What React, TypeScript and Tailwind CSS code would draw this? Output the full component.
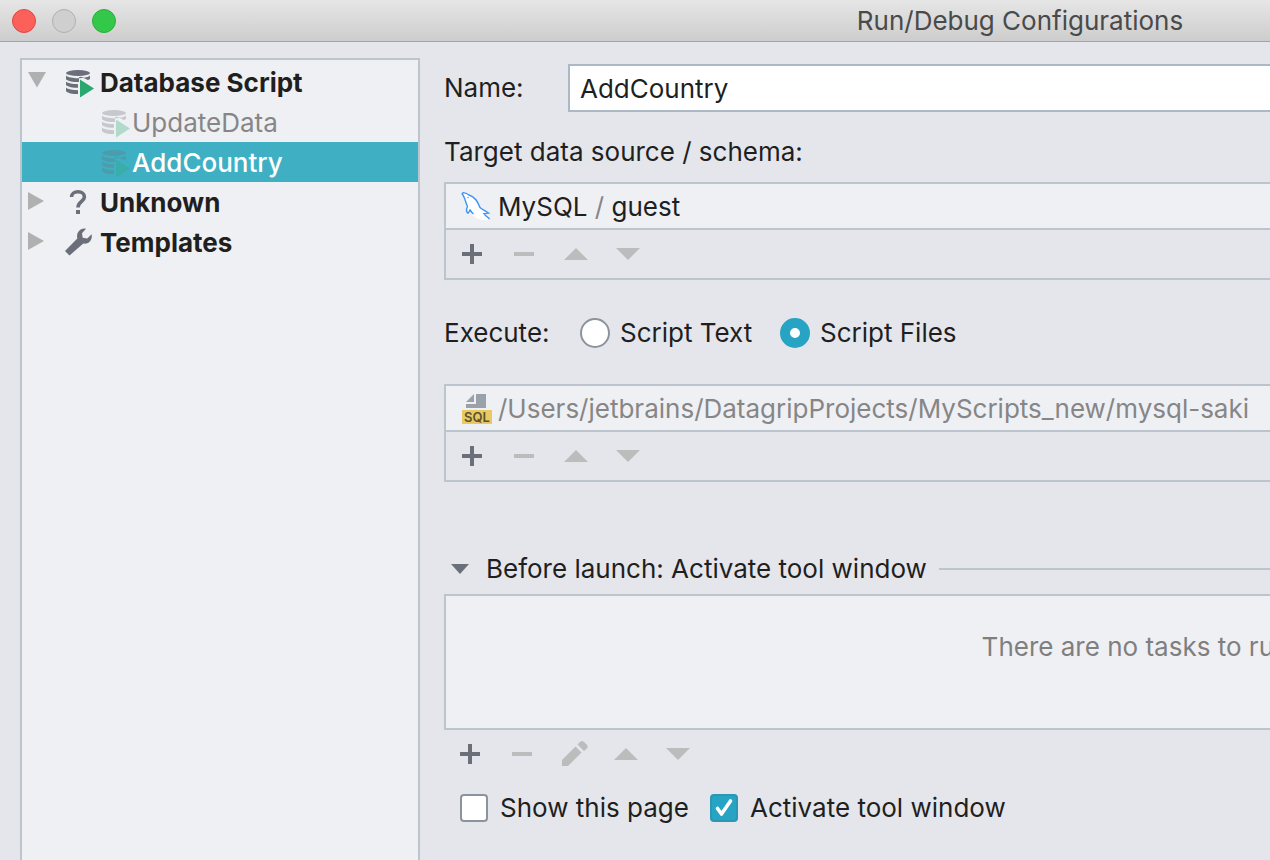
import { useState } from "react";
import type { ReactNode } from "react";

/* icons */

const DatabaseIcon = ({ className = "" }: { className?: string }) => (
    <svg className={`size-8 shrink-0 ${className}`} viewBox="0 1 32 32" aria-hidden="true">
        <g fill="#6b6f7a">
            <ellipse cx="14" cy="7" rx="12" ry="3" />
            <path d="M2 9.500c2 2 7 2.700 12 2.700s10-.7 12-2.700v3.500l-2 1-7-3.200-2 .4V16C9 16 4 15.200 2 13.200z" />
            <path d="M2 15.600c2 1.800 6.500 2.600 12 2.600v3.600C9 21.800 4 21 2 19z" />
            <path d="M2 21.600c2 1.800 6.500 2.600 12 2.600V28C8 28 4 27.200 2 25.200z" />
        </g>
        <path d="M16 13.500 30 22.500 16 31.500z" fill="#29a96f" />
    </svg>
);

const QuestionIcon = () => (
    <svg className="size-8 shrink-0" viewBox="0 1 32 32" aria-hidden="true">
        <path
            d="M7.500 11C7.500 7.500 10.500 5.800 14 5.800s6.400 1.800 6.400 5.200c0 4.500-6.400 4.500-6.400 10.500"
            fill="none"
            stroke="#6b6f7a"
            strokeWidth="3.600"
        />
        <rect x="12" y="24" width="4" height="4" fill="#6b6f7a" />
    </svg>
);

const WrenchIcon = () => (
    <svg className="size-8 shrink-0" viewBox="0 1 32 32" aria-hidden="true">
        <path
            d="M22 2.700 18 7.200l.7 4.500 4.600.8 4.300-4.300c1.300 5.300-2.600 10.300-8.300 9.300L5.500 29.500 1 25 13.300 12.500C12 6.200 16.500 1.500 22 2.700z"
            fill="#6b6f7a"
        />
    </svg>
);

const MySqlIcon = () => (
    <svg className="size-8 shrink-0" viewBox="0 0 32 32" aria-hidden="true">
        <path
            d="M2 2.500c3-1.500 6-.5 8 1.500 5 2 8 7 9.500 12.500 2 2 5 3 7.500 5.500l-3.500.5c1 2 4 3.500 5 6-5 1.500-11 0-14.500-3-2-1.500-3-3-4-4.500-1 .5-1.500 2.500-2 3-2.500-2-1.500-5-.5-7.500C5 13 4.500 7 2 2.500z"
            fill="#fff"
        />
        <path
            d="M8 22.500c-2-2-1.500-5-.5-7C5.500 12 5 6 2.300 3.300 1.500 1 6 1.500 9 4c5 1.500 9 7 11 12.500 2 2 5 3 8.500 5.500l-4.500.5c1 2 3.500 3.500 5.500 5.500M8 22.500l2-3.500c1 1.500 2 3 3.500 4"
            fill="none"
            stroke="#3b93f5"
            strokeWidth="1.400"
        />
        <circle cx="8" cy="6.500" r=".7" fill="#3b93f5" />
    </svg>
);

const SqlFileIcon = () => (
    <svg className="size-8 shrink-0" viewBox="0 0 32 32" aria-hidden="true">
        <path d="M14 1v8H6z" fill="#9ba1a9" />
        <path d="M16 1h10v14H6v-4h10z" fill="#9ba1a9" />
        <rect x="2" y="17" width="30" height="14" fill="#e9c962" />
        <text
            x="17"
            y="29"
            textAnchor="middle"
            fontFamily="Inter, sans-serif"
            fontSize="13"
            fontWeight="600"
            fill="#5a5230"
        >
            SQL
        </text>
    </svg>
);

const toolShapes = {
    Add: "M12 4h4v8h8v4h-8v8h-4v-8H4v-4h8z",
    Remove: "M4 12h20v4H4z",
    Edit: "M2 20 15.500 6.500 21.500 12.500 8 26H2zM17.500 4.500l2.700-2.700q1.800-1.800 3.600 0l3 3q1.800 1.800 0 3.600L24 11z",
    Up: "M14 8 26 20H2z",
    Down: "M2 8h24L14 20z",
};

type Tool = keyof typeof toolShapes;

const Toolbar = ({ tools, label }: { tools: Tool[]; label: string }) => (
    <div role="toolbar" aria-label={label} className="flex h-12 items-center">
        {tools.map((tool) => (
            <button
                key={tool}
                type="button"
                aria-label={tool}
                disabled={tool !== "Add"}
                className="flex h-full w-13 items-center justify-center text-[#6b6f7a] disabled:text-[#bcbcbc]"
            >
                <svg className="size-7" viewBox="0 0 28 28" aria-hidden="true">
                    <path d={toolShapes[tool]} fill="currentColor" />
                </svg>
            </button>
        ))}
    </div>
);

/* sidebar tree */

const Arrow = ({ open }: { open: boolean }) => (
    <svg className="mr-4 mb-0.5 size-5 shrink-0" viewBox="0 0 20 20" aria-hidden="true">
        <path d={open ? "M0 0h18L9 15.500z" : "M0 0 16 9 0 18z"} fill="#b0b0b0" />
    </svg>
);

const Group = ({ open = false, icon, name }: { open?: boolean; icon: ReactNode; name: string }) => (
    <button type="button" aria-expanded={open} className="flex h-10 w-full items-center pt-0.5 pl-1.5 font-bold">
        <Arrow open={open} />
        {icon}
        <span className="ml-1">{name}</span>
    </button>
);

const scripts = ["UpdateData", "AddCountry"];

const Sidebar = ({ selected, onSelect }: { selected: string; onSelect: (name: string) => void }) => (
    <nav className="mt-4 ml-5 w-[400px] shrink-0 border-2 border-b-0 border-[#bcc5ce] bg-[#eff0f4] pt-0.5">
        <Group open icon={<DatabaseIcon />} name="Database Script" />
        {scripts.map((name) => (
            <button
                key={name}
                type="button"
                onClick={() => onSelect(name)}
                className={`flex h-10 w-full items-center pt-0.5 pl-[78px] ${
                    name === selected ? "bg-[#3fb0c3] font-medium text-white" : "text-[#868686]"
                }`}
            >
                <DatabaseIcon className="opacity-30" />
                {name}
            </button>
        ))}
        <Group icon={<QuestionIcon />} name="Unknown" />
        <Group icon={<WrenchIcon />} name="Templates" />
    </nav>
);

/* list with its own toolbar */

const ListBox = ({ label, children }: { label: string; children: ReactNode }) => (
    <div className="border-2 border-r-0 border-[#bcc5ce]">
        <div className="flex h-[46px] items-center overflow-hidden border-b-2 border-[#bcc5ce] bg-[#eff0f4] pt-0.5 pl-3.5 whitespace-nowrap">
            {children}
        </div>
        <Toolbar label={label} tools={["Add", "Remove", "Up", "Down"]} />
    </div>
);

const Radio = ({ label, value, defaultChecked }: { label: string; value: string; defaultChecked?: boolean }) => (
    <label className="flex min-w-[200px] items-center gap-2.5">
        <input
            type="radio"
            name="execute"
            value={value}
            defaultChecked={defaultChecked}
            className="size-[30px] appearance-none rounded-full border-2 border-[#8b939e] bg-white checked:border-10 checked:border-[#27a3c3]"
        />
        {label}
    </label>
);

const Checkbox = ({ label, defaultChecked }: { label: string; defaultChecked?: boolean }) => (
    <label className="flex min-w-[250px] items-center gap-3">
        <span className="grid size-7">
            <input
                type="checkbox"
                defaultChecked={defaultChecked}
                className="peer col-start-1 row-start-1 size-7 appearance-none rounded border-2 border-[#8b939e] bg-white checked:border-[#2a97b5] checked:bg-[#27a3c3]"
            />
            <svg
                className="pointer-events-none invisible col-start-1 row-start-1 size-7 peer-checked:visible"
                viewBox="0 0 28 28"
                aria-hidden="true"
            >
                <path
                    d="m7.500 14.500 4 5.500 9-13"
                    fill="none"
                    stroke="#fff"
                    strokeWidth="3.600"
                    strokeLinecap="round"
                    strokeLinejoin="round"
                />
            </svg>
        </span>
        {label}
    </label>
);

export default function App() {
    const [name, setName] = useState("AddCountry");

    return (
        <div className="flex min-h-screen flex-col overflow-hidden bg-[#e4e6eb] font-[Inter,sans-serif] text-[26px] leading-8 text-[#1f1f1f]">
            {/* title bar */}
            <header className="flex h-[42px] items-center border-b border-[#a3a3a3] bg-linear-to-b from-[#e6e6e6] to-[#cdcdcd]">
                <div className="flex w-3/5 gap-4 pl-3">
                    <button type="button" aria-label="Close" className="size-6 rounded-full border border-[#e2463f] bg-[#fc605b]" />
                    <button type="button" aria-label="Minimize" className="size-6 rounded-full border border-[#b0b0b0] bg-[#cfcfcf]" />
                    <button type="button" aria-label="Zoom" className="size-6 rounded-full border border-[#2aae38] bg-[#34c84a]" />
                </div>
                <h1 className="flex-1 pl-2 text-center whitespace-nowrap text-[#4a4a4a]">Run/Debug Configurations</h1>
            </header>

            <div className="flex flex-1">
                <Sidebar selected={name} onSelect={setName} />

                <main className="min-w-0 flex-1 pt-[22px] pl-6">
                    <div className="flex items-center">
                        <label htmlFor="name" className="w-[124px] shrink-0">
                            Name:
                        </label>
                        <input
                            id="name"
                            value={name}
                            onChange={(e) => setName(e.target.value)}
                            className="h-12 min-w-0 flex-1 border-2 border-r-0 border-[#adb8c5] bg-white pl-2.5 outline-none"
                        />
                    </div>

                    <h2 className="mt-6 mb-3.5">Target data source / schema:</h2>
                    <ListBox label="Data sources">
                        <MySqlIcon />
                        <span className="ml-1.5">
                            MySQL <span className="text-[#868686]">/</span> guest
                        </span>
                    </ListBox>

                    <div role="radiogroup" aria-label="Execute" className="mt-[37px] mb-[35px] flex h-8 items-center">
                        <span className="w-[136px]">Execute:</span>
                        <Radio label="Script Text" value="text" />
                        <Radio label="Script Files" value="files" defaultChecked />
                    </div>

                    <ListBox label="Script files">
                        <SqlFileIcon />
                        <span className="ml-1.5 text-[#868686]">
                            /Users/jetbrains/DatagripProjects/MyScripts_new/mysql-saki
                        </span>
                    </ListBox>

                    {/* before launch */}
                    <div className="mt-[72px] mb-2.5 flex h-[30px] items-center">
                        <button type="button" aria-expanded="true" className="flex items-center whitespace-nowrap">
                            <svg className="mr-2.5 size-8" viewBox="0 0 32 32" aria-hidden="true">
                                <path d="M7 11h18l-9 10z" fill="#6b6f7a" />
                            </svg>
                            Before launch: Activate tool window
                        </button>
                        <div className="ml-3 h-0.5 flex-1 bg-[#bcc5ce]" />
                    </div>
                    <div className="h-[136px] overflow-hidden border-2 border-r-0 border-[#bcc5ce] bg-[#eff0f4] pt-[35px]">
                        <p className="ml-[65%] whitespace-nowrap text-[#7f7f7f]">There are no tasks to run</p>
                    </div>
                    <Toolbar label="Tasks" tools={["Add", "Remove", "Edit", "Up", "Down"]} />

                    <div className="mt-3 flex h-9 items-center pl-4">
                        <Checkbox label="Show this page" />
                        <Checkbox label="Activate tool window" defaultChecked />
                    </div>
                </main>
            </div>
        </div>
    );
}
